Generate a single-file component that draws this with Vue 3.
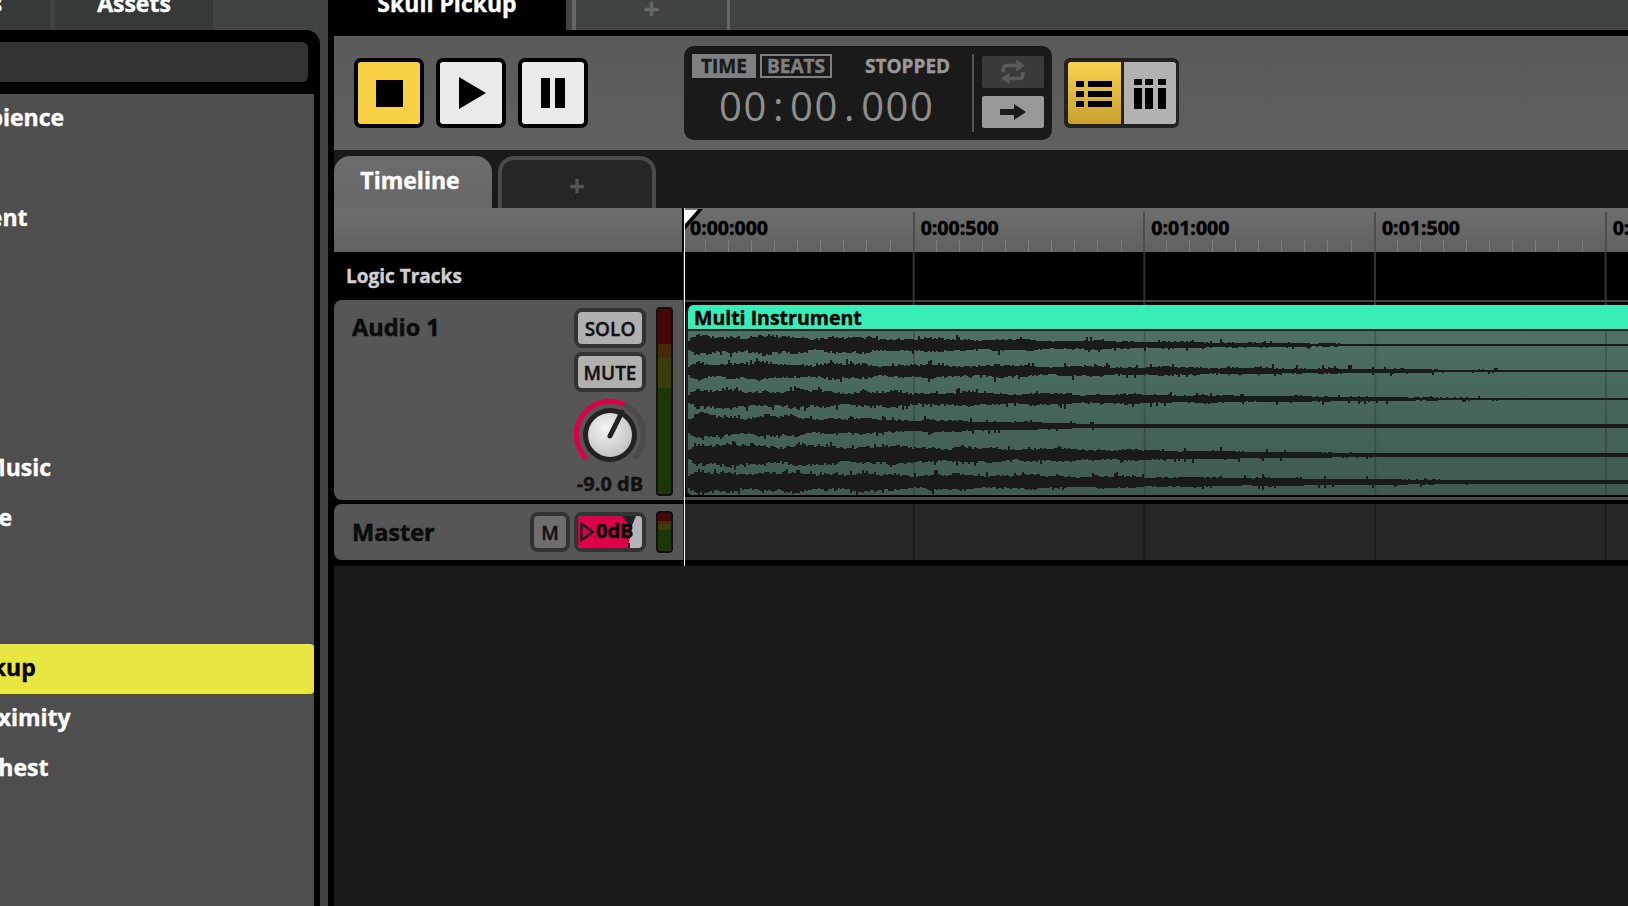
<template>
  <div class="app">
    <aside class="side">
      <div class="side-tabs">
        <div class="top-tab first">Rules</div>
        <div class="top-tab">Assets</div>
      </div>
      <div class="side-panel">
        <div class="search"></div>
        <ul class="list">
          <li v-for="(nome, i) in sons" :key="i" :class="{ ativo: nome === 'Skull Pickup' }">
            <span>{{ nome }}</span>
          </li>
        </ul>
      </div>
    </aside>

    <main class="main">
      <div class="main-tabs">
        <div class="doc-tab">Skull Pickup</div>
        <div class="doc-add">+</div>
      </div>

      <section class="transport">
        <button class="tbtn amarelo">
          <svg width="27" height="27" viewBox="0 0 27 27"><rect width="27" height="27" /></svg>
        </button>
        <button class="tbtn">
          <svg class="play" width="27" height="32" viewBox="0 0 27 32"><polygon points="0,0 27,16 0,32" /></svg>
        </button>
        <button class="tbtn">
          <svg width="24" height="30" viewBox="0 0 24 30"><rect width="9" height="30" /><rect x="14" width="10" height="30" /></svg>
        </button>

        <div class="display">
          <div class="display-left">
            <div class="display-top">
              <span class="badge on">TIME</span>
              <span class="badge">BEATS</span>
              <span class="status">STOPPED</span>
            </div>
            <div class="timer">00<span class="sep">:</span>00<span class="sep">.</span>000</div>
          </div>
          <div class="display-div"></div>
          <div class="display-btns">
            <div class="mini escuro">
              <svg width="26" height="26" viewBox="0 0 24 24" fill="#5a5a5a" stroke="#5a5a5a">
                <path d="M3 12V9.5Q3 6 6.5 6H17" fill="none" stroke-width="3.4" />
                <polygon points="15,0.5 23,6 15,11.5" stroke="none" />
                <path d="M21 12V14.5Q21 18 17.5 18H7" fill="none" stroke-width="3.4" />
                <polygon points="9,12.5 1,18 9,23.5" stroke="none" />
              </svg>
            </div>
            <div class="mini claro">
              <svg width="26" height="16" viewBox="0 0 26 16"><polygon points="0,5 14,5 14,0 26,8 14,16 14,11 0,11" fill="#1a1a1a" /></svg>
            </div>
          </div>
        </div>

        <div class="view-toggle">
          <div class="view ativo">
            <svg width="36" height="26" viewBox="0 0 36 26">
              <template v-for="y in [0, 10, 20]" :key="y">
                <rect :y="y" width="8" height="6" />
                <rect x="12" :y="y" width="24" height="6" />
              </template>
            </svg>
          </div>
          <div class="view">
            <svg width="32" height="30" viewBox="0 0 32 30">
              <template v-for="x in [0, 11, 24]" :key="x">
                <rect :x="x" width="8" height="6" />
                <rect :x="x" y="9" width="8" height="21" />
              </template>
            </svg>
          </div>
        </div>
      </section>

      <nav class="tabs">
        <div class="tab ativa">Timeline</div>
        <div class="tab nova">+</div>
      </nav>

      <section class="timeline">
        <div class="ruler">
          <div class="ruler-head"></div>
          <div class="ruler-scale">
            <div v-for="m in marcas" :key="m" class="mark">{{ m }}</div>
          </div>
        </div>

        <div class="track logic">
          <div class="logic-head">Logic Tracks</div>
          <div class="lane"></div>
        </div>

        <div class="track audio">
          <div class="head">
            <div class="name">Audio 1</div>
            <div class="controls">
              <button class="small">SOLO</button>
              <button class="small">MUTE</button>
              <svg class="knob" width="72" height="72" viewBox="0 0 72 72">
                <defs>
                  <radialGradient id="knobFill" cx="40%" cy="35%" r="75%">
                    <stop offset="0" stop-color="#f4f4f4" />
                    <stop offset="1" stop-color="#bcbcbc" />
                  </radialGradient>
                </defs>
                <path d="M50.2 5.6A33.5 33.5 0 0 1 59.7 59.7" fill="none" stroke="#4b4b4b" stroke-width="6" />
                <path d="M12.3 59.7A33.5 33.5 0 0 1 50.2 5.6" fill="none" stroke="#dc0048" stroke-width="5" />
                <circle cx="36" cy="36" r="27" fill="#222" />
                <circle cx="36" cy="36" r="22" fill="url(#knobFill)" />
                <line x1="36" y1="37" x2="48" y2="13" stroke="#222" stroke-width="5" stroke-linecap="round" />
              </svg>
              <div class="db">-9.0 dB</div>
            </div>
            <div class="meter">
              <i class="m-red" style="height: 35px"></i>
              <i class="m-orange" style="height: 14px"></i>
              <i class="m-olive" style="height: 30px"></i>
              <i class="m-green"></i>
            </div>
          </div>
          <div class="lane audio-lane">
            <div class="clip">
              <div class="clip-title">Multi Instrument</div>
              <div class="clip-body">
                <svg width="948" height="164" viewBox="0 0 948 164" shape-rendering="crispEdges">
                  <path v-for="(d, i) in ondas" :key="i" :d="d" fill="#1a1a1a" />
                </svg>
              </div>
            </div>
          </div>
        </div>

        <div class="track master">
          <div class="head">
            <div class="name">Master</div>
            <button class="small m">M</button>
            <div class="fader">
              <svg width="64" height="32" viewBox="0 0 64 32">
                <rect width="64" height="32" fill="#b4b4b4" />
                <polygon points="0,0 44,0 54,12 50,32 0,32" fill="#dc0048" />
                <polygon points="44,0 58,0 53,12" fill="#222" />
                <rect x="50" y="27" width="2" height="5" fill="#222" />
                <polygon points="3.5,8 3.5,24 15,16" fill="none" stroke="#222" stroke-width="2.5" />
              </svg>
              <span>0dB</span>
            </div>
            <div class="meter">
              <i class="m-red" style="height: 8px"></i>
              <i class="m-orange" style="height: 3px"></i>
              <i class="m-olive" style="height: 6px"></i>
              <i class="m-green"></i>
            </div>
          </div>
          <div class="lane"></div>
        </div>

        <div class="rest"></div>

        <svg class="flag" width="22" height="44" viewBox="0 0 22 44">
          <rect width="2" height="44" fill="#000" />
          <polygon points="2,1 21,1 2,23" fill="#000" />
          <polygon points="3,1.5 16,1.5 3,16" fill="#fff" />
        </svg>
        <div class="playhead"></div>
      </section>
    </main>
  </div>
</template>

<script setup>
const sons = [
  'Bird Ambience', '', 'Instrument', '', '', '', '', 'Victory Music', 'Boss Tune', '', '',
  'Skull Pickup', 'Skull Proximity', 'Golden Chest'
];

const marcas = ['0:00:000', '0:00:500', '0:01:000', '0:01:500', '0:02:000'];

// pseudo aleatorio fixo, para a onda sair sempre igual
let semente = 11;
const rnd = () => {
  semente = (semente * 16807) % 2147483647;
  return semente / 2147483647;
};

const gerarOnda = ({ centro, amp, fim, base }) => {
  const cima = [];
  const baixo = [];
  for (let x = 0; x <= 948; x += 2) {
    const t = Math.max(0, 1 - x / fim);
    const ataque = Math.min(1, (x + 6) / 14);
    const lomba = 0.76 + 0.15 * Math.sin(x / 13 + centro) + 0.09 * Math.sin(x / 5.3);
    const env = amp * Math.pow(t, 1.05) * ataque * lomba;
    const pico = () => (rnd() > 0.9 && t > 0 ? 4 * rnd() * Math.min(1, t * 3 + 0.4) : 0);
    const a = Math.round(base + env * (0.65 + 0.35 * rnd()) + pico());
    const b = Math.round(base + env * (0.65 + 0.35 * rnd()) + pico());
    cima.push(`${x} ${centro - a}`, `${x + 2} ${centro - a}`);
    baixo.unshift(`${x + 2} ${centro + b}`, `${x} ${centro + b}`);
  }
  return 'M' + cima.concat(baixo).join('L') + 'Z';
};

const ondas = [
  { centro: 14, amp: 12, fim: 690, base: 1 },
  { centro: 40, amp: 11, fim: 810, base: 1 },
  { centro: 68, amp: 12, fim: 810, base: 1 },
  { centro: 95, amp: 14, fim: 420, base: 2 },
  { centro: 124, amp: 13, fim: 690, base: 2 },
  { centro: 151, amp: 12, fim: 790, base: 2 }
].map(gerarOnda);
</script>

<style>
html, body {
  margin: 0;
  background: #000;
  overflow: hidden;
}
</style>

<style scoped>
.app {
  width: 1628px;
  height: 906px;
  display: flex;
  overflow: hidden;
  background: #000;
  font-family: "Open Sans", "DejaVu Sans", sans-serif;
  font-weight: 700;
  color: #fff;
  -webkit-text-stroke: 0.4px currentColor;
}

/* Coluna da esquerda */
.side {
  width: 328px;
  flex: none;
  display: flex;
  flex-direction: column;
  background: #3f4344;
}
.side-tabs {
  height: 30px;
  flex: none;
  display: flex;
  gap: 5px;
  overflow: hidden;
}
.top-tab {
  width: 158px;
  flex: none;
  display: flex;
  align-items: flex-end;
  justify-content: center;
  padding-bottom: 11px;
  box-sizing: border-box;
  background: #36393a;
  font-size: 23px;
}
.top-tab.first {
  margin-left: -108px;
}
.side-panel {
  width: 320px;
  flex: 1;
  min-height: 0;
  display: flex;
  flex-direction: column;
  box-sizing: border-box;
  padding-top: 12px;
  background: #000;
  border-top-right-radius: 14px;
}
.search {
  width: 308px;
  height: 40px;
  flex: none;
  background: #333;
  border-radius: 0 6px 6px 0;
}
.list {
  width: 314px;
  flex: 1;
  margin: 12px 0 0;
  padding: 0;
  list-style: none;
  background: #4e4e4e;
}
.list li {
  height: 50px;
  box-sizing: border-box;
  padding-bottom: 5px;
  display: flex;
  align-items: center;
  font-size: 23px;
  white-space: nowrap;
  overflow: hidden;
}
.list li span {
  margin-left: -103.5px;
}
.list li.ativo {
  background: #e8e640;
  color: #000;
  border-radius: 0 4px 4px 0;
}

/* Area principal */
.main {
  flex: 1;
  min-width: 0;
  display: flex;
  flex-direction: column;
  padding-left: 6px;
}
.main-tabs {
  height: 30px;
  flex: none;
  margin-left: -6px;
  margin-bottom: 6px;
  display: flex;
  background: #3f4344;
  overflow: hidden;
}
.doc-tab {
  width: 238px;
  flex: none;
  display: flex;
  align-items: flex-end;
  justify-content: center;
  padding-bottom: 11px;
  box-sizing: border-box;
  background: #000;
  font-size: 23px;
}
.doc-add {
  width: 158px;
  margin-left: 6px;
  box-sizing: border-box;
  display: flex;
  align-items: flex-end;
  justify-content: center;
  padding-bottom: 3px;
  border: 4px solid #666;
  border-width: 0 3px 0 4px;
  color: #666;
  font-size: 28px;
}

.transport {
  height: 114px;
  flex: none;
  display: flex;
  align-items: center;
  gap: 12px;
  padding-left: 20px;
  background: linear-gradient(#5a5a5a, #606060);
}
.tbtn {
  width: 70px;
  height: 70px;
  padding: 0;
  display: flex;
  align-items: center;
  justify-content: center;
  box-sizing: border-box;
  background: #eaeaea;
  border: 4px solid #000;
  border-radius: 7px;
}
.tbtn.amarelo {
  background: #f8d044;
}
.tbtn .play {
  margin-left: 2px;
}
.display {
  width: 368px;
  height: 94px;
  margin-left: 84px;
  display: flex;
  box-sizing: border-box;
  padding: 8px;
  background: #1a1a1a;
  border-radius: 10px;
}
.display-left {
  width: 280px;
  flex: none;
}
.display-top {
  display: flex;
  align-items: center;
  gap: 4px;
  height: 24px;
}
.badge {
  height: 24px;
  width: 64px;
  box-sizing: border-box;
  display: flex;
  align-items: center;
  justify-content: center;
  border: 2px solid #808080;
  color: #808080;
  font-size: 19px;
}
.badge + .badge {
  width: 72px;
}
.badge.on {
  background: #808080;
  color: #1a1a1a;
}
.status {
  margin-left: 29px;
  color: #999;
  font-size: 19px;
}
.timer {
  margin: 1px 0 0 27px;
  font-size: 40px;
  line-height: 54px;
  font-weight: 400;
  color: #8e8e8e;
  letter-spacing: 1.6px;
  white-space: nowrap;
  -webkit-text-stroke: 0;
}
.sep {
  margin: 0 5px;
}
.display-div {
  width: 2px;
  height: 78px;
  background: #555;
}
.display-btns {
  display: flex;
  flex-direction: column;
  gap: 8px;
  margin: 2px 0 0 8px;
}
.mini {
  width: 62px;
  height: 32px;
  display: flex;
  align-items: center;
  justify-content: center;
  border-radius: 2px;
}
.mini.escuro {
  background: #3a3a3a;
}
.mini.claro {
  background: #999;
}
.view-toggle {
  height: 70px;
  width: 115px;
  display: flex;
  gap: 3px;
  box-sizing: border-box;
  padding: 4px 3px 4px 4px;
  background: #222;
  border-radius: 6px;
}
.view {
  flex: 1;
  display: flex;
  align-items: center;
  justify-content: center;
  background: #b2b2b2;
  border-radius: 0 3px 3px 0;
}
.view svg {
  margin-top: 2px;
}
.view.ativo {
  background: linear-gradient(#f8d24d, #c8a030);
  border-radius: 3px 0 0 3px;
}

.tabs {
  height: 58px;
  flex: none;
  display: flex;
  gap: 6px;
  box-sizing: border-box;
  padding-top: 6px;
  background: #1a1a1a;
}
.tab {
  width: 158px;
  box-sizing: border-box;
  border-radius: 16px 16px 0 0;
  text-align: center;
  font-size: 23px;
}
.tab.ativa {
  padding-top: 8px;
  padding-right: 6px;
  background: linear-gradient(#6c6c6c, #676767);
}
.tab.nova {
  padding-top: 6px;
  background: #262626;
  border: 4px solid #4a4a4a;
  border-bottom: 0;
  color: #555;
  font-size: 28px;
}

/* Timeline */
.timeline {
  flex: 1;
  min-height: 0;
  position: relative;
  display: flex;
  flex-direction: column;
}
.ruler {
  height: 44px;
  flex: none;
  display: flex;
  background: linear-gradient(#6e6e6e, #606060);
}
.ruler-head {
  width: 349px;
  flex: none;
}
.ruler-scale {
  flex: 1;
  display: flex;
  margin-left: -1px;
  overflow: hidden;
}
.mark {
  width: 230.67px;
  flex: none;
  height: 40px;
  margin-top: 4px;
  box-sizing: border-box;
  padding: 0 0 0 6px;
  border-left: 2px solid #4d4d4d;
  color: #000;
  font-size: 19.5px;
  line-height: 31px;
  white-space: nowrap;
  -webkit-text-stroke: 0.55px currentColor;
  background: repeating-linear-gradient(90deg, transparent 0 21px, #7c7c7c 21px 22px, transparent 22px 23.07px) 0 100% / 100% 12px no-repeat;
}
.track {
  flex: none;
  display: grid;
  grid-template-columns: 349px 1fr;
}
.lane {
  background-color: #000;
  background-image: linear-gradient(90deg, #333 2px, transparent 2px);
  background-size: 230.67px 100%;
  background-position: -1px 0;
}
.logic {
  height: 48px;
}
.logic-head {
  padding-left: 12px;
  color: #d0d0d0;
  font-size: 19px;
  line-height: 48px;
}
.audio {
  height: 200px;
  margin-bottom: 4px;
}
.head {
  display: flex;
  box-sizing: border-box;
  padding: 8px 10px 4px 18px;
  background: #565656;
  border-radius: 8px 0 0 8px;
}
.name {
  flex: 1;
  color: #0c0c0c;
  font-size: 23.5px;
  line-height: 38px;
  -webkit-text-stroke: 0.55px currentColor;
}
.controls {
  width: 72px;
  display: flex;
  flex-direction: column;
  gap: 4px;
}
.small {
  width: 72px;
  height: 40px;
  padding: 1px 0 0;
  box-sizing: border-box;
  background: #b0b0b0;
  border: 4px solid #333;
  border-radius: 8px;
  font-family: inherit;
  font-size: 19px;
  font-weight: 600;
  color: #111;
}
.knob {
  margin-top: 3px;
  flex: none;
}
.db {
  margin-top: -3px;
  text-align: center;
  color: #111;
  font-size: 20px;
  line-height: 24px;
  white-space: nowrap;
}
.meter {
  width: 17px;
  flex: none;
  margin-left: 10px;
  margin-top: -1px;
  display: flex;
  flex-direction: column;
  box-sizing: border-box;
  border: 2px solid #111;
  border-radius: 4px;
  overflow: hidden;
  background: #1c3608;
}
.meter i {
  display: block;
  flex: none;
}
.m-red { background: #430909; }
.m-orange { background: #452a08; }
.m-olive { background: #3a3c0a; }
.meter .m-green { flex: 1; background: #1c3608; }

.audio-lane {
  box-sizing: border-box;
  padding: 3px 0 0 3px;
  border-top: 2px solid #444;
  border-bottom: 3px solid #4c4c4c;
  overflow: hidden;
}
.clip {
  height: 192px;
  width: 950px;
  box-sizing: border-box;
  border: 2px solid #222;
  border-width: 0 0 2px 2px;
  border-bottom-color: #000;
  border-radius: 7px 0 0 7px;
  overflow: hidden;
}
.clip-title {
  height: 26px;
  box-sizing: border-box;
  padding-left: 6px;
  background: #39edb6;
  border-bottom: 2px solid #222;
  color: #000;
  font-size: 19.5px;
  line-height: 26px;
  white-space: nowrap;
}
.clip-body {
  height: 164px;
  background-color: #466a5e;
  background-image:
    linear-gradient(90deg, rgba(0, 0, 0, 0.18) 2px, transparent 2px),
    linear-gradient(#4d7064, #3f5a50);
  background-size: 230.67px 100%, 100% 100%;
  background-position: 225px 0, 0 0;
}
.clip-body svg {
  display: block;
}

.master {
  height: 56px;
}
.master .head {
  align-items: center;
  padding: 0 10px 0 18px;
  gap: 4px;
}
.master .name {
  line-height: 32px;
}
.small.m {
  width: 40px;
  background: #6e6e6e;
}
.fader {
  width: 72px;
  height: 40px;
  position: relative;
  box-sizing: border-box;
  border: 4px solid #333;
  border-radius: 8px;
  overflow: hidden;
  color: #000;
  font-size: 20px;
  line-height: 30px;
}
.fader svg {
  display: block;
}
.fader span {
  position: absolute;
  left: 18px;
  top: 0;
}
.master .meter {
  height: 42px;
  margin-left: 6px;
  margin-top: 0;
}
.master .lane {
  background-color: #262626;
  background-image: linear-gradient(90deg, #1a1a1a 2px, transparent 2px);
}
.rest {
  flex: 1;
  margin-top: 6px;
  background: #1a1a1a;
}
.playhead {
  position: absolute;
  left: 350px;
  top: 0;
  width: 1px;
  height: 358px;
  background: #fff;
}
.flag {
  position: absolute;
  left: 348px;
  top: 0;
}
</style>
